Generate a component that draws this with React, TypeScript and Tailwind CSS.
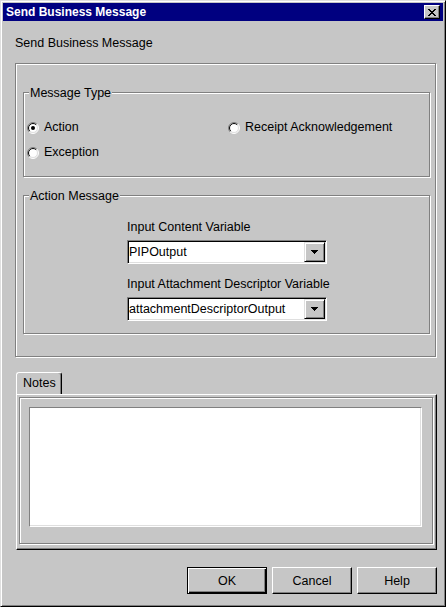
import React from "react";

const X_PATTERN = [
  "XX....XX",
  ".XX..XX.",
  "..XXXX..",
  "...XX...",
  "..XXXX..",
  ".XX..XX.",
  "XX....XX",
];

function CloseGlyph() {
  const rects: React.ReactElement[] = [];
  X_PATTERN.forEach((row, y) =>
    row.split("").forEach((c, x) => {
      if (c === "X") rects.push(<rect key={`${x}-${y}`} x={x} y={y} width={1} height={1} fill="#000" />);
    })
  );
  return (
    <svg width="8" height="7" viewBox="0 0 8 7" shapeRendering="crispEdges">
      {rects}
    </svg>
  );
}

function Radio({ checked }: { checked?: boolean }) {
  const o = 5.5 / Math.SQRT2;
  const i = 4.5 / Math.SQRT2;
  return (
    <svg width="12" height="12" viewBox="0 0 12 12" className="shrink-0">
      <circle cx="6" cy="6" r="5" fill="#fff" />
      <path d={`M ${6 - o} ${6 + o} A 5.5 5.5 0 0 1 ${6 + o} ${6 - o}`} stroke="#808080" fill="none" />
      <path d={`M ${6 + o} ${6 - o} A 5.5 5.5 0 0 1 ${6 - o} ${6 + o}`} stroke="#ffffff" fill="none" />
      <path d={`M ${6 - i} ${6 + i} A 4.5 4.5 0 0 1 ${6 + i} ${6 - i}`} stroke="#000" fill="none" />
      <path d={`M ${6 + i} ${6 - i} A 4.5 4.5 0 0 1 ${6 - i} ${6 + i}`} stroke="#dfdfdf" fill="none" />
      {checked && <circle cx="6" cy="6" r="2" fill="#000" />}
    </svg>
  );
}

function RadioItem({ label, checked }: { label: string; checked?: boolean }) {
  return (
    <div className="flex items-center gap-[5px] h-[25px]">
      <Radio checked={checked} />
      <span className="leading-[15px] whitespace-nowrap">{label}</span>
    </div>
  );
}

function Combo({ value }: { value: string }) {
  return (
    <div className="flex w-[200px] h-[24px] bg-white border border-t-[#808080] border-l-[#808080] border-r-white border-b-white shadow-[inset_1px_1px_0_#000,inset_-1px_-1px_0_#dfdfdf] p-[1px]">
      <div className="flex-1 flex items-center pt-[1px] leading-[15px] whitespace-nowrap overflow-hidden">{value}</div>
      <div className="w-[21px] h-[20px] bg-[#c6c6c6] border border-t-[#dfdfdf] border-l-[#dfdfdf] border-r-black border-b-black shadow-[inset_1px_1px_0_#fff,inset_-1px_-1px_0_#808080] flex items-center justify-center">
        <svg width="7" height="4" viewBox="0 0 7 4" shapeRendering="crispEdges">
          <path d="M0 0h7v1h-1v1h-1v1h-1v1h-1v-1h-1v-1h-1v-1h-1z" fill="#000" />
        </svg>
      </div>
    </div>
  );
}

function Group({ title, className, children }: { title: string; className?: string; children?: React.ReactNode }) {
  return (
    <div className={`relative w-[407px] border border-[#808080] shadow-[1px_1px_0_#fff,inset_1px_1px_0_#fff] ${className ?? ""}`}>
      <span className="absolute left-[5px] top-[-7px] px-[1px] bg-[#c6c6c6] leading-[15px] whitespace-nowrap">{title}</span>
      {children}
    </div>
  );
}

function Button({ label, isDefault }: { label: string; isDefault?: boolean }) {
  return isDefault ? (
    <div className="w-[80px] h-[27px] border border-black shadow-[inset_1px_1px_0_#fff,inset_-1px_-1px_0_#000,inset_-2px_-2px_0_#808080] flex items-center justify-center pt-[1px] leading-[15px]">
      {label}
    </div>
  ) : (
    <div className="w-[80px] h-[27px] border border-t-white border-l-white border-r-black border-b-black shadow-[inset_-1px_-1px_0_#808080] flex items-center justify-center pt-[1px] leading-[15px]">
      {label}
    </div>
  );
}

export default function App() {
  return (
    <div className="w-[446px] h-[607px] bg-[#c6c6c6] border border-t-[#dfdfdf] border-l-[#dfdfdf] border-r-black border-b-black shadow-[inset_1px_1px_0_#fff,inset_-1px_-1px_0_#808080] p-[2px] flex flex-col font-['Liberation_Sans',Arial,sans-serif] text-[12.5px] text-black">
      {/* Title bar */}
      <div className="h-[18px] shrink-0 bg-[#000080] flex items-center justify-between pl-[3px] pr-[3px]">
        <span className="text-white font-bold text-[12px] leading-[15px] whitespace-nowrap">Send Business Message</span>
        <div className="w-[16px] h-[14px] bg-[#c6c6c6] border border-t-white border-l-white border-r-black border-b-black shadow-[inset_-1px_-1px_0_#808080] flex items-center justify-center">
          <CloseGlyph />
        </div>
      </div>

      {/* Subtitle */}
      <div className="mt-[15px] ml-[12px] h-[15px] leading-[15px] whitespace-nowrap">Send Business Message</div>

      {/* Main panel */}
      <div className="mt-[12px] ml-[12px] w-[421px] h-[294px] shrink-0 border border-[#808080] shadow-[1px_1px_0_#fff,inset_1px_1px_0_#fff] pl-[7px] pt-[28px] flex flex-col">
        <Group title="Message Type" className="h-[85px]">
          <div className="pt-[22px] pl-[3px] grid grid-cols-[201px_1fr]">
            <RadioItem label="Action" checked />
            <RadioItem label="Receipt Acknowledgement" />
            <RadioItem label="Exception" />
          </div>
        </Group>
        <Group title="Action Message" className="h-[139px] mt-[18px]">
          <div className="pt-[24px] pl-[103px] flex flex-col">
            <div className="h-[15px] leading-[15px] whitespace-nowrap">Input Content Variable</div>
            <div className="mt-[5px]">
              <Combo value="PIPOutput" />
            </div>
            <div className="mt-[13px] h-[15px] leading-[15px] whitespace-nowrap">Input Attachment Descriptor Variable</div>
            <div className="mt-[5px]">
              <Combo value="attachmentDescriptorOutput" />
            </div>
          </div>
        </Group>
      </div>

      {/* Notes tab */}
      <div className="mt-[15px] ml-[13px] w-[46px] h-[22px] shrink-0 border-t border-l border-r border-t-white border-l-white border-r-black rounded-tl-[3px] rounded-tr-[3px] shadow-[inset_-1px_0_0_#808080] pl-[6px] pt-[3px] leading-[15px]">
        Notes
      </div>
      <div className="ml-[13px] w-[421px] h-[156px] shrink-0 border border-t-white border-l-white border-r-black border-b-black shadow-[inset_-1px_-1px_0_#808080] p-[2px]">
        <div className="w-[414px] h-[147px] border border-[#808080] shadow-[1px_1px_0_#fff,inset_1px_1px_0_#fff] pl-[9px] pt-[9px]">
          <div className="w-[393px] h-[120px] bg-white border border-t-[#808080] border-l-[#808080] border-r-white border-b-white shadow-[inset_-1px_-1px_0_#dfdfdf]" />
        </div>
      </div>

      {/* Buttons */}
      <div className="mt-[17px] pr-[6px] flex justify-end gap-[5px]">
        <Button label="OK" isDefault />
        <Button label="Cancel" />
        <Button label="Help" />
      </div>
    </div>
  );
}
